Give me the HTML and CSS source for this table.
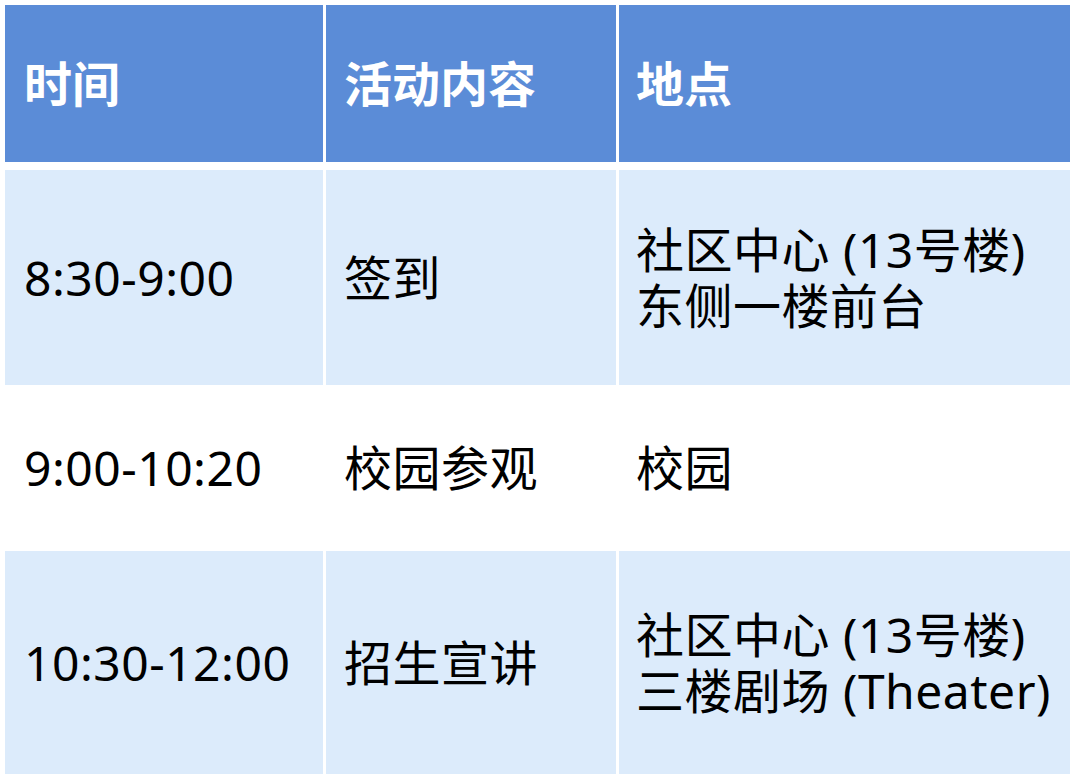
FILE: index.html
```html
<!DOCTYPE html>
<html lang="zh-CN">
<head>
<meta charset="utf-8">
<link rel="stylesheet" href="styles.css">
</head>
<body>
<div class="schedule">
  <div class="cell head">时间</div>
  <div class="cell head">活动内容</div>
  <div class="cell head">地点</div>

  <div class="cell tint">8:30-9:00</div>
  <div class="cell tint">签到</div>
  <div class="cell tint">社区中心 (13号楼)<br>东侧一楼前台</div>

  <div class="cell plain">9:00-10:20</div>
  <div class="cell plain">校园参观</div>
  <div class="cell plain">校园</div>

  <div class="cell tint">10:30-12:00</div>
  <div class="cell tint">招生宣讲</div>
  <div class="cell tint">社区中心 (13号楼)<br>三楼剧场 (Theater)</div>
</div>
</body>
</html>
```
FILE: styles.css
```css
html, body {
  margin: 0;
  padding: 0;
  background: #ffffff;
}
body {
  padding: 5px 0 0 5px;
  font-family: "Noto Sans", "Noto Sans CJK SC", sans-serif;
  color: #000000;
}
.schedule {
  display: grid;
  grid-template-columns: 318px 290px 451px;
  grid-template-rows: 162px 215px 160px 223px;
  column-gap: 3px;
  row-gap: 3px;
  width: 1066px;
}
.cell {
  display: flex;
  align-items: center;
  padding: 0 2px 0 19px;
  font-size: 48px;
  line-height: 56px;
  white-space: nowrap;
}
.cell.head {
  background: #5b8cd7;
  color: #ffffff;
  font-weight: 700;
  margin-bottom: 5px;
}
.cell.tint {
  background: #dcebfb;
  letter-spacing: 0.5px;
}
.cell.plain {
  background: #ffffff;
  letter-spacing: 0.5px;
}
.schedule .cell:nth-child(3n+2) { padding-left: 18px; }
.schedule .cell:nth-child(3n) { padding-left: 17px; }
```
